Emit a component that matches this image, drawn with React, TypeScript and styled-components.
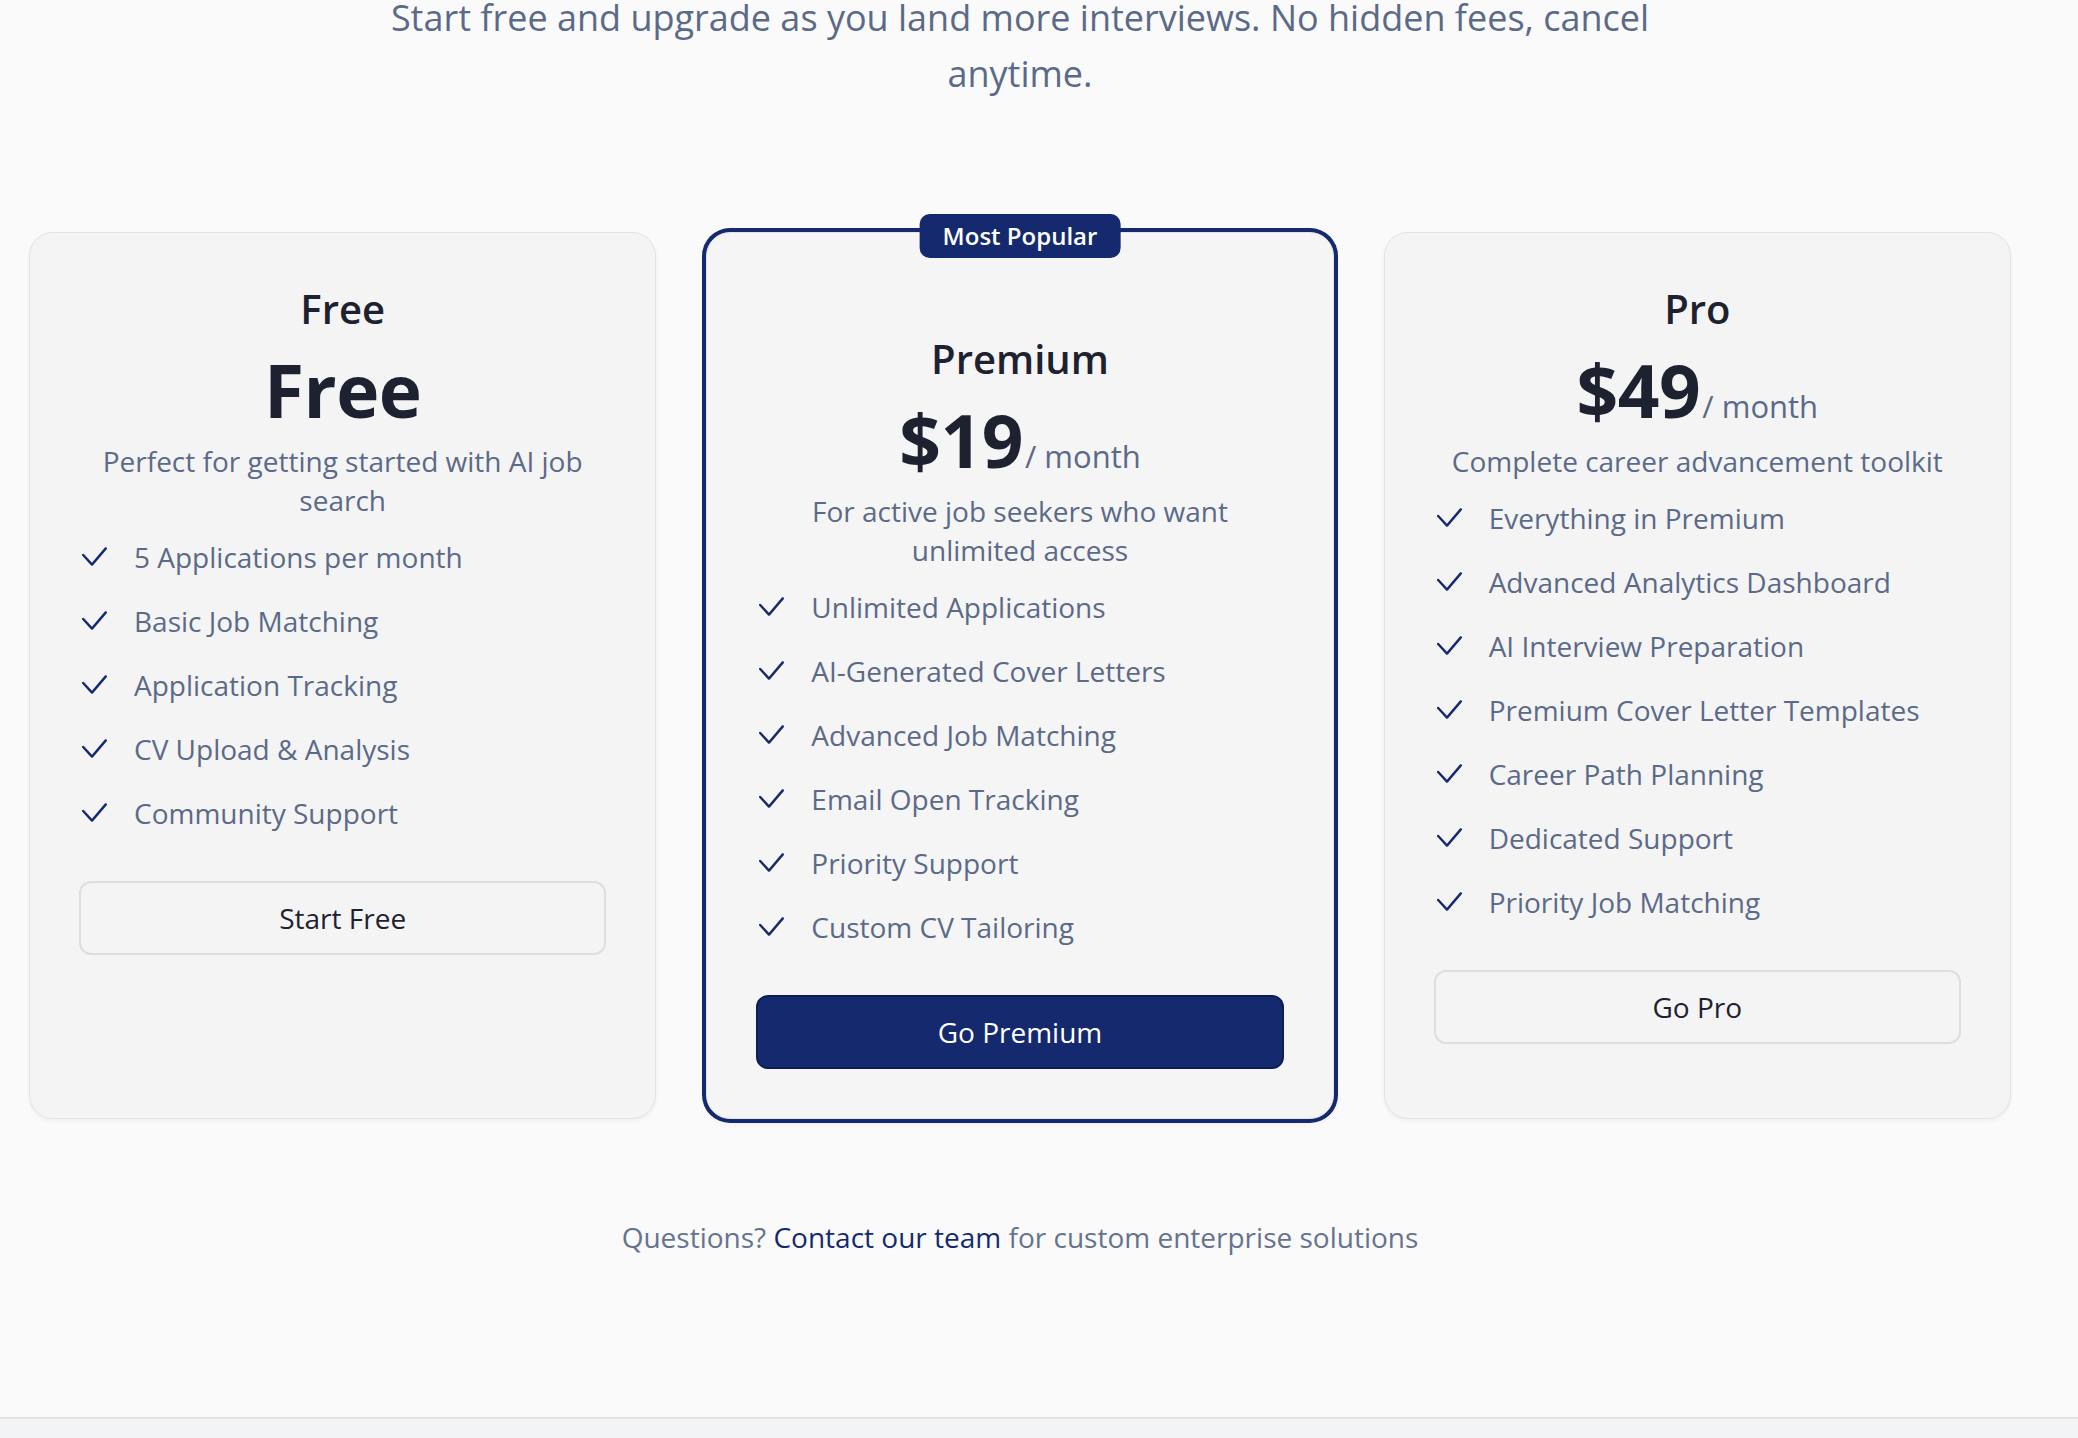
import React from "react";
import styled, { createGlobalStyle, css } from "styled-components";

const NAVY = "#152a6e";
const MUTED = "#5b6a88";
const INK = "#1e2230";

const GlobalStyle = createGlobalStyle`
  html, body {
    margin: 0;
    padding: 0;
    background: #fafafa;
  }
  body {
    font-family: "Open Sans", "Noto Sans", "Liberation Sans", sans-serif;
    -webkit-font-smoothing: antialiased;
  }
  * { box-sizing: border-box; }
`;

const Page = styled.div`
  height: 100vh;
  background: #fafafa;
  display: flex;
  flex-direction: column;
  overflow: hidden;
`;

const Section = styled.section`
  padding-right: 38px;
  display: flex;
  flex-direction: column;
  align-items: center;
`;

const Subtitle = styled.p`
  margin: -10px auto 0;
  max-width: 1320px;
  text-align: center;
  font-size: 36px;
  line-height: 56px;
  color: ${MUTED};
`;

const Grid = styled.div`
  margin-top: 130px;
  width: 100%;
  padding: 0 29px;
  display: grid;
  grid-template-columns: repeat(3, 1fr);
  gap: 50px;
  align-items: stretch;
`;

const Card = styled.div<{ $featured?: boolean }>`
  position: relative;
  display: flex;
  flex-direction: column;
  background: #f4f4f4;
  border: 1px solid #e3e3e5;
  border-radius: 24px;
  padding: 49px;
  box-shadow: 0 2px 4px rgba(0, 0, 0, 0.05);
  ${(p) =>
    p.$featured &&
    css`
      background: #f5f5f5;
      padding-top: 99px;
      box-shadow: 0 0 0 4px ${NAVY}, 0 4px 10px rgba(0, 0, 0, 0.06);
    `}
`;

const Badge = styled.span`
  position: absolute;
  top: -19px;
  left: 50%;
  transform: translateX(-50%);
  height: 44px;
  padding: 0 23px;
  border-radius: 10px;
  background: ${NAVY};
  color: #ffffff;
  font-size: 24px;
  font-weight: 600;
  line-height: 44px;
  white-space: nowrap;
`;

const PlanName = styled.h3`
  margin: 0;
  text-align: center;
  font-size: 40px;
  font-weight: 600;
  line-height: 53px;
  color: ${INK};
`;

const PriceRow = styled.div`
  margin-top: 18px;
  height: 74px;
  display: flex;
  justify-content: center;
  align-items: baseline;
`;

const Amount = styled.span`
  font-size: 73px;
  font-weight: 700;
  line-height: 74px;
  color: ${INK};
  letter-spacing: -0.5px;
`;

const Period = styled.span`
  margin-left: 2px;
  font-size: 31px;
  line-height: 1;
  color: ${MUTED};
`;

const Description = styled.p`
  margin: 15px 0 0;
  text-align: center;
  font-size: 28px;
  line-height: 39.2px;
  color: ${MUTED};
`;

const FeatureList = styled.ul`
  list-style: none;
  margin: 16.5px 0 0;
  padding: 0;
  display: flex;
  flex-direction: column;
  gap: 24px;
`;

const Feature = styled.li`
  display: flex;
  align-items: center;
  gap: 27px;
  height: 40px;
  font-size: 28px;
  line-height: 40px;
  color: ${MUTED};
`;

const CheckSvg = styled.svg`
  flex: none;
  margin-left: 3px;
  width: 25px;
  height: 19px;
`;

const PlanButton = styled.button<{ $primary?: boolean }>`
  margin-top: 48px;
  width: 100%;
  height: 74px;
  border-radius: 12px;
  border: 2px solid #dedede;
  background: transparent;
  color: ${INK};
  font-family: inherit;
  font-size: 28px;
  font-weight: 500;
  cursor: pointer;
  ${(p) =>
    p.$primary &&
    css`
      background: ${NAVY};
      border: 2px solid #0e1d52;
      color: #ffffff;
    `}
`;

const Contact = styled.p`
  margin: 98px 0 0;
  text-align: center;
  font-size: 28px;
  line-height: 40px;
  color: #66738f;
`;

const ContactLink = styled.a`
  color: ${NAVY};
  text-decoration: none;
`;

const Footer = styled.footer`
  margin-top: 160px;
  flex: 1;
  min-height: 20px;
  border-top: 2px solid #e2e3e6;
  background: #f3f4f6;
`;

const Check = () => (
  <CheckSvg viewBox="0 0 25 19" fill="none">
    <polyline
      points="1.2,8 10,17.6 23.8,1.4"
      stroke={NAVY}
      strokeWidth="2.4"
      strokeLinecap="round"
      strokeLinejoin="round"
    />
  </CheckSvg>
);

type Plan = {
  name: string;
  price: string;
  period?: string;
  description: string;
  features: string[];
  cta: string;
  featured?: boolean;
};

const plans: Plan[] = [
  {
    name: "Free",
    price: "Free",
    description: "Perfect for getting started with AI job search",
    features: [
      "5 Applications per month",
      "Basic Job Matching",
      "Application Tracking",
      "CV Upload & Analysis",
      "Community Support",
    ],
    cta: "Start Free",
  },
  {
    name: "Premium",
    price: "$19",
    period: "/ month",
    description: "For active job seekers who want unlimited access",
    features: [
      "Unlimited Applications",
      "AI-Generated Cover Letters",
      "Advanced Job Matching",
      "Email Open Tracking",
      "Priority Support",
      "Custom CV Tailoring",
    ],
    cta: "Go Premium",
    featured: true,
  },
  {
    name: "Pro",
    price: "$49",
    period: "/ month",
    description: "Complete career advancement toolkit",
    features: [
      "Everything in Premium",
      "Advanced Analytics Dashboard",
      "AI Interview Preparation",
      "Premium Cover Letter Templates",
      "Career Path Planning",
      "Dedicated Support",
      "Priority Job Matching",
    ],
    cta: "Go Pro",
  },
];

export default function App() {
  return (
    <Page>
      <GlobalStyle />
      <Section>
        <Subtitle>
          Start free and upgrade as you land more interviews. No hidden fees, cancel anytime.
        </Subtitle>
        <Grid>
          {plans.map((plan) => (
            <Card key={plan.name} $featured={plan.featured}>
              {plan.featured && <Badge>Most Popular</Badge>}
              <PlanName>{plan.name}</PlanName>
              <PriceRow>
                <Amount>{plan.price}</Amount>
                {plan.period && <Period>{plan.period}</Period>}
              </PriceRow>
              <Description>{plan.description}</Description>
              <FeatureList>
                {plan.features.map((f) => (
                  <Feature key={f}>
                    <Check />
                    <span>{f}</span>
                  </Feature>
                ))}
              </FeatureList>
              <PlanButton $primary={plan.featured}>{plan.cta}</PlanButton>
            </Card>
          ))}
        </Grid>
        <Contact>
          Questions? <ContactLink href="#">Contact our team</ContactLink> for custom enterprise solutions
        </Contact>
      </Section>
      <Footer />
    </Page>
  );
}
